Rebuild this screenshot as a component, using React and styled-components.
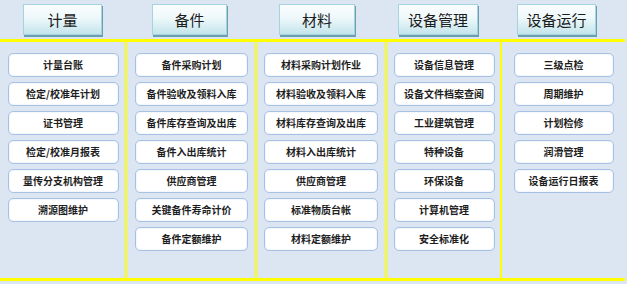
import React from "react";
import styled, { createGlobalStyle } from "styled-components";

const Global = createGlobalStyle`
  html, body { margin: 0; padding: 0; background: #dce6f2; }
  body { font-family: "Noto Sans CJK SC", "Noto Sans", sans-serif; }
`;

const COLS = [125, 128, 128, 113, 123];
const grid = "125px 2px 128px 2px 128px 2px 113px 2px 123px";

const Page = styled.div`
  width: 627px;
  height: 284px;
  background: #dce6f2;
  overflow: hidden;
`;

const Header = styled.div`
  display: grid;
  grid-template-columns: ${grid};
  width: 625px;
  height: 39px;
`;

const HeaderCell = styled.div`
  grid-column: span ${(p) => p.$span};
  padding-top: 4px;
`;

const NavButton = styled.div`
  box-sizing: border-box;
  width: ${(p) => p.$w}px;
  height: 31px;
  margin-left: ${(p) => p.$x}px;
  border: 1px solid #a5d4e0;
  background: linear-gradient(to bottom, #fbfdfe 0%, #eef8fa 45%, #c4e5ec 100%);
  box-shadow: 1px 2px 0 #6c9fad;
  display: flex;
  align-items: center;
  justify-content: center;
  font-size: 15px;
  color: #1c1c1c;
  line-height: 1;
`;

const Board = styled.div`
  display: grid;
  grid-template-columns: ${grid};
  width: 625px;
  border-top: 3px solid #ffff00;
  border-bottom: 3px solid #ffff00;
  height: 236px;
`;

const Divider = styled.div`
  background: #ffff00;
`;

const Column = styled.div`
  display: flex;
  flex-direction: column;
  align-items: center;
  gap: 5px;
  padding-top: 11px;
  padding-left: ${(p) => p.$shift}px;
`;

const Card = styled.div`
  box-sizing: border-box;
  width: ${(p) => p.$w}px;
  height: 24px;
  background: #ffffff;
  border: 1px solid #a7c1e5;
  border-radius: 5px;
  box-shadow: inset 0 0 2px #d3e1f3;
  display: flex;
  align-items: center;
  justify-content: center;
  font-size: 10px;
  font-weight: 700;
  color: #1e1e1e;
  white-space: nowrap;
  line-height: 1;
`;

const sections = [
  {
    title: "计量",
    btn: { w: 79, x: 23 },
    card: 111,
    shift: 1,
    items: ["计量台账", "检定/校准年计划", "证书管理", "检定/校准月报表", "量传分支机构管理", "溯源图维护"],
  },
  {
    title: "备件",
    btn: { w: 75, x: 25 },
    card: 113,
    shift: 1,
    items: ["备件采购计划", "备件验收及领料入库", "备件库存查询及出库", "备件入出库统计", "供应商管理", "关键备件寿命计价", "备件定额维护"],
  },
  {
    title: "材料",
    btn: { w: 76, x: 22 },
    card: 114,
    shift: 0,
    items: ["材料采购计划作业", "材料验收及领料入库", "材料库存查询及出库", "材料入出库统计", "供应商管理", "标准物质台帐", "材料定额维护"],
  },
  {
    title: "设备管理",
    btn: { w: 80, x: 11 },
    card: 101,
    shift: 1,
    items: ["设备信息管理", "设备文件档案查阅", "工业建筑管理", "特种设备", "环保设备", "计算机管理", "安全标准化"],
  },
  {
    title: "设备运行",
    btn: { w: 79, x: 15 },
    card: 100,
    shift: 0,
    items: ["三级点检", "周期维护", "计划检修", "润滑管理", "设备运行日报表"],
  },
];

export default function App() {
  return (
    <Page>
      <Global />
      <Header>
        {sections.map((s, i) => (
          <HeaderCell key={s.title} $span={i < sections.length - 1 ? 2 : 1}>
            <NavButton $w={s.btn.w} $x={s.btn.x}>{s.title}</NavButton>
          </HeaderCell>
        ))}
      </Header>
      <Board>
        {sections.map((s, i) => (
          <React.Fragment key={s.title}>
            <Column $shift={s.shift}>
              {s.items.map((t, j) => (
                <Card key={j} $w={s.card}>{t}</Card>
              ))}
            </Column>
            {i < sections.length - 1 && <Divider />}
          </React.Fragment>
        ))}
      </Board>
    </Page>
  );
}
